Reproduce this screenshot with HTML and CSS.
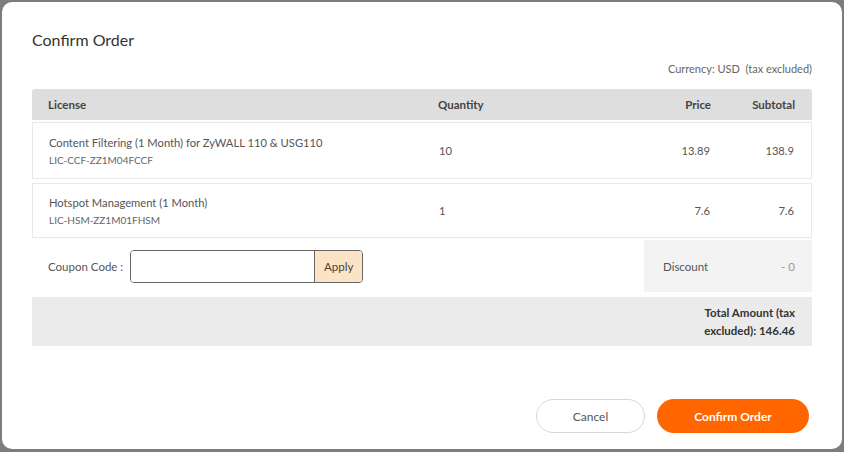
FILE: index.html
```html
<!DOCTYPE html>
<html lang="en">
<head>
    <meta charset="utf-8" />
    <title>Confirm Order</title>
    <meta name="viewport" content="width=device-width, initial-scale=1" />
<link rel="stylesheet" href="styles.css">
</head>
<body>
<div class="modal">
  <h1 class="modal-title">Confirm Order</h1>

  <div class="currency">Currency: USD&nbsp; (tax excluded)</div>

  <div class="order-table">
    <div class="row head">
      <div>License</div>
      <div>Quantity</div>
      <div class="num">Price</div>
      <div class="num">Subtotal</div>
    </div>
    <div class="row item">
      <div>
        <div class="name">Content Filtering (1 Month) for ZyWALL 110 &amp; USG110</div>
        <div class="sku">LIC-CCF-ZZ1M04FCCF</div>
      </div>
      <div>10</div>
      <div class="num">13.89</div>
      <div class="num">138.9</div>
    </div>
    <div class="row item">
      <div>
        <div class="name">Hotspot Management (1 Month)</div>
        <div class="sku">LIC-HSM-ZZ1M01FHSM</div>
      </div>
      <div>1</div>
      <div class="num">7.6</div>
      <div class="num">7.6</div>
    </div>
  </div>

  <div class="coupon-row">
    <div class="coupon">
      <label for="coupon">Coupon Code :</label>
      <div class="coupon-field">
        <input id="coupon" type="text" />
        <button class="apply">Apply</button>
      </div>
    </div>
    <div class="discount">
      <span>Discount</span>
      <span>- 0</span>
    </div>
  </div>

  <div class="total">
    <div class="total-text">Total Amount (tax excluded): 146.46</div>
  </div>

  <div class="footer">
    <button class="btn btn-cancel">Cancel</button>
    <button class="btn btn-confirm">Confirm Order</button>
  </div>
</div>
</body>
</html>
```

FILE: styles.css
```css
html, body {
    margin: 0;
    height: 100%;
}

body {
    background-color: #7d7d7d;
    padding: 2px;
    box-sizing: border-box;
    font-family: 'Lato', 'Noto Sans', sans-serif;
    color: #555;
}

.modal {
    background: #fff;
    width: 840px;
    height: 447px;
    border-radius: 10px;
    box-sizing: border-box;
    padding: 28px 30px 16px 30px;
    display: flex;
    flex-direction: column;
}

.modal-title {
    margin: 0;
    font-size: 16px;
    font-weight: normal;
    color: #333;
    line-height: 20px;
}

.currency {
    text-align: right;
    font-size: 11px;
    color: #666;
    margin-top: 12px;
    line-height: 14px;
}

.order-table {
    margin-top: 13px;
}

.row {
    display: grid;
    grid-template-columns: 390px 1fr 100px 84px;
    padding: 0 17px 0 16px;
    box-sizing: border-box;
    align-items: center;
    font-size: 11.2px;
}

.row .num {
    text-align: right;
}

.row.head {
    background: #dedede;
    height: 31px;
    border-radius: 3px 3px 0 0;
    font-weight: 700;
    font-size: 11.5px;
    color: #444;
}

.row.item {
    height: 57px;
    border: 1px solid #e8e8e8;
    margin-top: 2px;
    color: #555;
}

.row.item + .row.item {
    margin-top: 4px;
    height: 55px;
}

.name {
    line-height: 16px;
}

.sku {
    font-size: 10px;
    color: #666;
    margin-top: 3px;
}

.coupon-row {
    display: flex;
    justify-content: space-between;
    margin-top: 2px;
    height: 52px;
}

.coupon {
    display: flex;
    align-items: center;
    padding-left: 16px;
    font-size: 11.5px;
}

.coupon label {
    margin-right: 7px;
}

.coupon-field {
    display: flex;
    width: 233px;
    height: 33px;
    border: 1px solid #666;
    border-radius: 4px;
    box-sizing: border-box;
    overflow: hidden;
}

.coupon-field input {
    flex: 1;
    border: none;
    outline: none;
    min-width: 0;
}

.apply {
    width: 48px;
    border: none;
    border-left: 1px solid #666;
    background: #fde3c6;
    font-family: inherit;
    font-size: 11.5px;
    color: #444;
}

.discount {
    width: 168px;
    background: #f3f3f3;
    display: flex;
    justify-content: space-between;
    align-items: center;
    padding: 0 17px 0 19px;
    box-sizing: border-box;
    font-size: 11.5px;
}

.discount span:last-child {
    color: #9a9a9a;
}

.total {
    background: #ebebeb;
    margin-top: 5px;
    height: 49px;
    display: flex;
    justify-content: flex-end;
    align-items: center;
    padding-right: 17px;
}

.total-text {
    width: 112px;
    text-align: right;
    font-size: 11.5px;
    font-weight: 700;
    color: #333;
    line-height: 18px;
}

.footer {
    margin-top: auto;
    display: flex;
    justify-content: flex-end;
    gap: 12px;
    padding-right: 3px;
}

.btn {
    height: 34px;
    border-radius: 17px;
    font-family: inherit;
    font-size: 12px;
}

.btn-cancel {
    width: 109px;
    background: #fff;
    border: 1px solid #d8d8d8;
    color: #555;
}

.btn-confirm {
    width: 152px;
    background: #ff6600;
    border: none;
    color: #fff;
    font-weight: 700;
}
```
